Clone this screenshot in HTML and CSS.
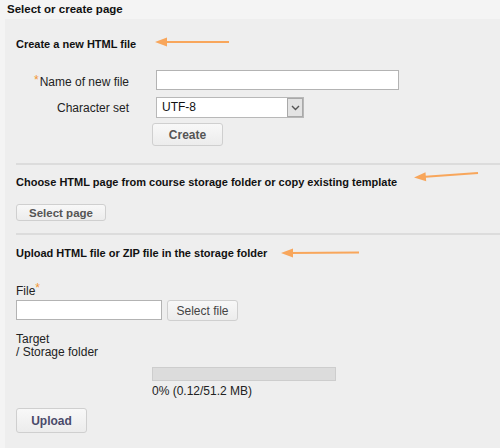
FILE: index.html
```html
<!DOCTYPE html>
<html>
<head>
<meta charset="utf-8">
<link rel="stylesheet" href="styles.css">
</head>
<body>
<div class="page">
  <div class="title">Select or create page</div>
  <div class="panel">
    <section class="sec sec-create">
      <h3 class="head">Create a new HTML file
        <svg class="arrow a1" width="76" height="10" viewBox="0 0 76 10"><path d="M74 5 L8 5" stroke="#f8a65b" stroke-width="2" fill="none"/><path d="M0 5 L12 0.5 L12 9.5 Z" fill="#f8a65b"/></svg>
      </h3>
      <div class="form">
        <div class="row">
          <label class="lbl"><span class="req">*</span>Name of new file</label>
          <input class="txt txt-name" type="text">
        </div>
        <div class="row">
          <label class="lbl">Character set</label>
          <div class="select"><span class="sel-val">UTF-8</span><span class="sel-btn"><svg width="9" height="6" viewBox="0 0 9 6"><path d="M1 1 L4.5 4.5 L8 1" stroke="#555" stroke-width="1.4" fill="none"/></svg></span></div>
        </div>
        <div class="row row-btn">
          <button class="btn btn-create">Create</button>
        </div>
      </div>
    </section>
    <section class="sec sec-choose">
      <h3 class="head">Choose HTML page from course storage folder or copy existing template
        <svg class="arrow a2" width="66" height="12" viewBox="0 0 66 12"><path d="M64 3 L8 7" stroke="#f8a65b" stroke-width="2" fill="none"/><path d="M0 7.6 L11.5 2.3 L12.2 11.3 Z" fill="#f8a65b"/></svg>
      </h3>
      <button class="btn btn-select">Select page</button>
    </section>
    <section class="sec sec-upload">
      <h3 class="head">Upload HTML file or ZIP file in the storage folder
        <svg class="arrow a3" width="80" height="10" viewBox="0 0 80 10"><path d="M78 4.5 L8 5" stroke="#f8a65b" stroke-width="2" fill="none"/><path d="M0 5 L12 0.5 L12 9.5 Z" fill="#f8a65b"/></svg>
      </h3>
      <div class="flabel">File<span class="req">*</span></div>
      <div class="filerow">
        <input class="txt txt-file" type="text">
        <button class="btn btn-file">Select file</button>
      </div>
      <div class="target">Target<br>/ Storage folder</div>
      <div class="progress">
        <div class="bar"></div>
        <div class="ptext">0% (0.12/51.2 MB)</div>
      </div>
      <button class="btn btn-upload">Upload</button>
    </section>
  </div>
</div>
</body>
</html>
```
FILE: styles.css
```css
* { box-sizing: border-box; }
html, body { margin: 0; padding: 0; }
body {
  background: #f4f4f4;
  font-family: "Liberation Sans", Arial, sans-serif;
  font-size: 12px;
  color: #222;
  width: 500px;
  height: 448px;
  overflow: hidden;
}
.title {
  font-weight: bold;
  font-size: 11.5px;
  padding: 3px 0 0 7px;
  height: 19px;
  color: #111;
}
.panel {
  margin-left: 5px;
  background: #eeeeee;
  height: 429px;
}
.sec { margin-left: 11px; }
.head {
  position: relative;
  margin: 0;
  font-size: 11px;
  font-weight: bold;
  color: #111;
  display: inline-block;
}
.arrow { position: absolute; }
.sec-create { padding-top: 18px; height: 146px; border-bottom: 2px solid #dcdcdc; }
.a1 { left: 139px; top: -1px; }
.form { margin-top: 19px; display: flex; flex-direction: column; }
.row { display: flex; align-items: center; height: 25px; }
.row:first-child { height: 25px; align-items: flex-start; }
.row:first-child .lbl { margin-top: 3px; }
.lbl {
  width: 113px;
  text-align: right;
  font-size: 12px;
  color: #222;
  margin-right: 27px;
}
.req { color: #f29633; font-size: 12px; vertical-align: 2px; margin-right: 1px; }
.txt {
  height: 20px;
  border: 1px solid #b3b3b3;
  background: #fff;
  margin: 0;
  padding: 0;
}
.txt-name { width: 243px; }
.select {
  width: 148px;
  height: 21px;
  border: 1px solid #b8b8b8;
  background: #fff;
  display: flex;
  align-items: stretch;
}
.sel-val { flex: 1; padding-left: 5px; line-height: 19px; font-size: 12px; color: #111; }
.sel-btn {
  width: 16px;
  background: #e3e3e3;
  border: 1px solid #a9a9a9;
  display: flex;
  align-items: center;
  justify-content: center;
}
.row-btn { padding-left: 136px; height: 26px; align-items: flex-end; }
.btn {
  font-family: "Liberation Sans", Arial, sans-serif;
  font-weight: bold;
  font-size: 12px;
  color: #555;
  background: linear-gradient(#f8f8f8, #ececec);
  border: 1px solid #cfcfcf;
  border-radius: 3px;
  padding: 0;
  margin: 0;
}
.btn-create { width: 71px; height: 23px; }
.sec-choose { padding-top: 10px; height: 70px; border-bottom: 2px solid #dcdcdc; }
.a2 { left: 398px; top: -6px; }
.btn-select { display: block; margin-top: 15px; width: 90px; height: 17px; font-size: 11.5px; }
.sec-upload { padding-top: 11px; }
.a3 { left: 265px; top: 1px; }
.flabel { margin-top: 21px; font-size: 12px; color: #222; }
.flabel .req { vertical-align: 3px; }
.filerow { display: flex; gap: 5px; margin-top: 2px; }
.txt-file { width: 146px; }
.btn-file { width: 71px; height: 21px; font-weight: normal; color: #444; }
.target { margin-top: 12px; line-height: 13px; font-size: 12px; color: #222; }
.progress { margin-left: 136px; margin-top: 8px; }
.bar { width: 184px; height: 14px; background: #dcdcdc; border: 1px solid #cdcdcd; }
.ptext { font-size: 12px; color: #222; margin-top: 3px; }
.btn-upload { display: block; margin-top: 10px; width: 71px; height: 25px; color: #4a4a6a; }
```
